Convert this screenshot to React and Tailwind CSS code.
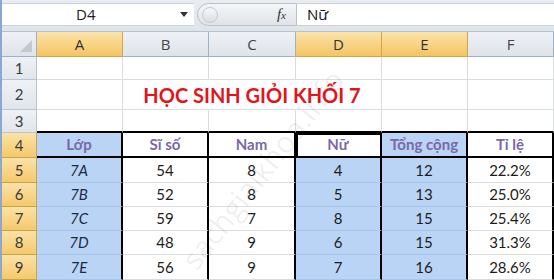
import React from "react";

const cols = ["A", "B", "C", "D", "E", "F"];
const hot = { A: true, D: true, E: true };

const data = [
  ["7A", "54", "8", "4", "12", "22.2%"],
  ["7B", "52", "8", "5", "13", "25.0%"],
  ["7C", "59", "7", "8", "15", "25.4%"],
  ["7D", "48", "9", "6", "15", "31.3%"],
  ["7E", "56", "9", "7", "16", "28.6%"],
];

const heads = ["Lớp", "Sĩ số", "Nam", "Nữ", "Tổng cộng", "Tỉ lệ"];

const RowHead = ({ n, on }) => (
  <div
    className={
      on
        ? "flex items-center justify-center border-r border-b border-[#c9a24c] bg-gradient-to-b from-[#fbe2a6] to-[#f4c96a] text-[15px] text-[#3a3a3a]"
        : "flex items-center justify-center border-r border-b border-[#b9c4d2] bg-gradient-to-b from-[#eef1f5] to-[#e1e6ec] text-[15px] text-[#3a3a3a]"
    }
  >
    {n}
  </div>
);

const Blank = () => <div className="border-r border-b border-[#dadcdd] bg-white" />;

const App = () => {
  return (
    <div className="relative w-[554px] h-[280px] overflow-hidden bg-white border-l-2 border-[#86a9d6] font-['Open_Sans',sans-serif]">
      {/* Formula bar */}
      <div className="flex h-[32px] bg-gradient-to-b from-[#e9edf2] to-[#dfe4ea] pt-[3px] pb-[5px] border-b border-[#b7c2cf]">
        <div className="flex w-[192px] items-center bg-white border-y border-[#c9d1db] pl-[74px] pr-[6px]">
          <span className="text-[15px] text-[#222]">D4</span>
          <svg className="ml-auto" width="8" height="5" viewBox="0 0 8 5"><path d="M0 0 L8 0 L4 5 Z" fill="#333" /></svg>
        </div>
        <div className="flex w-[100px] items-center ml-[3px] rounded-l-full bg-gradient-to-b from-[#f4f6f8] to-[#dfe3e8] border border-[#b9c1cc]">
          <div className="ml-[4px] h-[16px] w-[16px] rounded-full bg-gradient-to-b from-[#f7f8fa] to-[#d9dee5] border border-[#c4cad3]" />
          <span className="ml-auto mr-[10px] text-[15px] italic font-['Liberation_Serif',serif] text-[#333]">
            f<span className="text-[11px]">x</span>
          </span>
        </div>
        <div className="flex flex-1 items-center bg-white border-y border-[#c9d1db] pl-[10px] text-[15px] text-[#111]">
          Nữ
        </div>
      </div>

      {/* Sheet */}
      <div className="grid grid-cols-[35px_86px_86px_87px_86px_86px_86px] grid-rows-[25px_23px_30px_23px_25px_25px_24px_24px_24px_25px] font-['Lato','Noto_Sans',sans-serif]">
        {/* header row */}
        <div className="relative border-r border-b border-[#9fb1c6] bg-gradient-to-b from-[#eef1f5] to-[#dfe4ea]">
          <svg className="absolute right-[4px] bottom-[4px]" width="12" height="12" viewBox="0 0 12 12">
            <path d="M12 0 L12 12 L0 12 Z" fill="#c3c9d1" />
          </svg>
        </div>
        {cols.map((c) =>
          hot[c] ? (
            <div key={c} className="flex items-center justify-center border-r border-b border-[#d9a43e] bg-gradient-to-b from-[#fbe3a8] to-[#f3c562] text-[15px] text-[#333] font-['Open_Sans',sans-serif]">
              {c}
            </div>
          ) : (
            <div key={c} className="flex items-center justify-center border-r border-b border-[#9fb1c6] bg-gradient-to-b from-[#eef1f5] to-[#dfe4ea] text-[15px] text-[#444] font-['Open_Sans',sans-serif]">
              {c}
            </div>
          )
        )}

        {/* row 1 */}
        <RowHead n="1" />
        {cols.map((c) => <Blank key={c} />)}

        {/* row 2 */}
        <RowHead n="2" />
        <Blank />
        <div className="col-span-3 flex items-center justify-center border-r border-b border-[#dadcdd] bg-white text-[20px] leading-none font-bold text-[#e3151c]">
          HỌC SINH GIỎI KHỐI 7
        </div>
        <Blank />
        <Blank />

        {/* row 3 */}
        <RowHead n="3" />
        {cols.map((c) => (
          <div key={c} className="border-r border-r-[#dadcdd] border-b-2 border-b-black bg-white" />
        ))}

        {/* row 4 */}
        <RowHead n="4" on />
        {heads.map((h, i) => {
          if (i === 3)
            return (
              <div key={h} className="flex items-center justify-center border-2 border-l-0 border-t-0 border-black bg-white text-[15px] font-bold text-[#7b68a8] shadow-[inset_2px_2px_0_0_#000]">
                {h}
              </div>
            );
          const blue = i === 0 || i === 4;
          return (
            <div
              key={h}
              className={
                blue
                  ? "flex items-center justify-center border-r-2 border-b-2 border-black bg-[#b9d4f5] text-[15px] font-bold text-[#7b68a8]"
                  : "flex items-center justify-center border-r-2 border-b-2 border-black bg-white text-[15px] font-bold text-[#7b68a8]"
              }
            >
              {h}
            </div>
          );
        })}

        {/* data rows */}
        {data.map((r, ri) => (
          <React.Fragment key={ri}>
            <RowHead n={String(ri + 5)} on />
            {r.map((v, i) => {
              const blue = i === 0 || i === 3 || i === 4;
              return (
                <div
                  key={i}
                  className={
                    blue
                      ? "flex items-center justify-center border-r-2 border-r-black border-b border-b-[#a9c6ea] bg-[#b9d4f5] text-[15px] text-[#1c1c1c]"
                      : "flex items-center justify-center border-r-2 border-r-black border-b border-b-[#dadcdd] bg-white text-[15px] text-[#1c1c1c]"
                  }
                >
                  <span className={i === 0 ? "italic text-[#1e2a44]" : ""}>{v}</span>
                </div>
              );
            })}
          </React.Fragment>
        ))}
      </div>

      {/* watermark */}
      <div className="pointer-events-none absolute left-[186px] top-[250px] rotate-[-52deg] origin-left text-[30px] leading-none font-['Open_Sans',sans-serif] text-black/[0.07] whitespace-nowrap">
        sachgiaikhoa.info
      </div>
    </div>
  );
};

export default App;
